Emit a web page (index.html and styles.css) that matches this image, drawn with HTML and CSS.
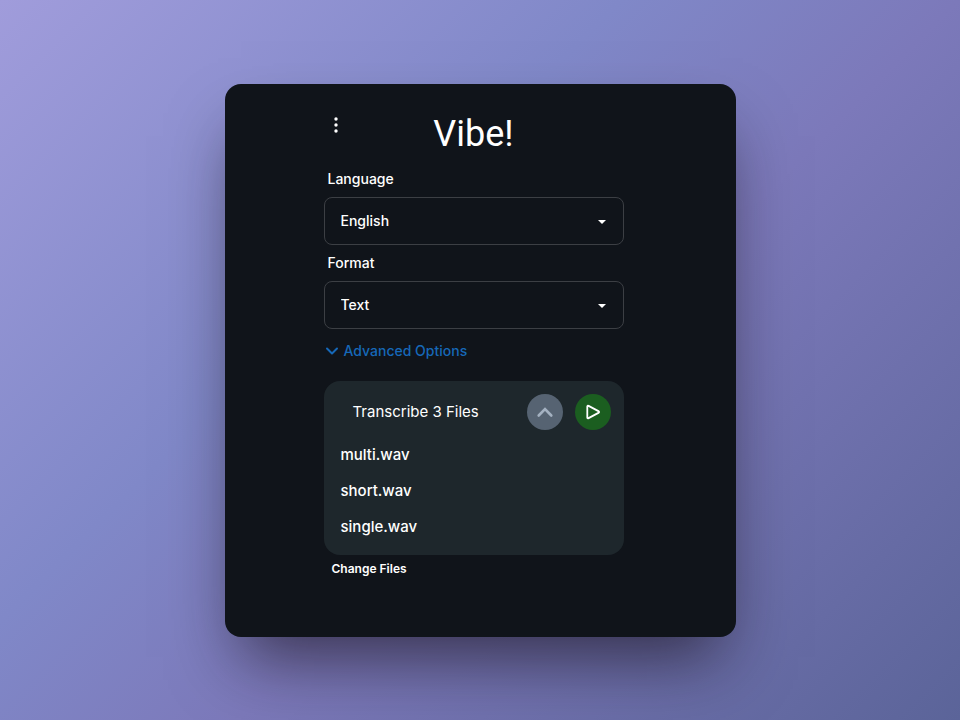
FILE: index.html
```html
<!DOCTYPE html>
<html lang="en">
<head>
    <meta charset="UTF-8">
    <meta name="viewport" content="width=device-width, initial-scale=1.0">
    <title>Vibe!</title>
    <link rel="stylesheet" href="styles.css">
</head>
<body>
    <main class="window">
        <div class="content">
            <header class="header">
                <button class="menu" type="button" aria-label="Menu">
                    <svg width="24" height="24" viewBox="0 0 24 24" fill="currentColor">
                        <circle cx="12" cy="6" r="1.7"/>
                        <circle cx="12" cy="12" r="1.7"/>
                        <circle cx="12" cy="18" r="1.7"/>
                    </svg>
                </button>
                <h1>Vibe!</h1>
            </header>
            <form class="options">
                <label for="language">Language</label>
                <select id="language">
                    <option>English</option>
                </select>
                <label for="format">Format</label>
                <select id="format">
                    <option>Text</option>
                </select>
                <button class="advanced" type="button">
                    <svg width="16" height="16" viewBox="0 0 16 16" fill="none" stroke="currentColor" stroke-width="2" stroke-linecap="round" stroke-linejoin="round">
                        <path d="M3 5.500l5 5 5-5"/>
                    </svg>
                    Advanced Options
                </button>
            </form>
            <section class="files">
                <div class="files-header">
                    <h2>Transcribe 3 Files</h2>
                    <button class="round" type="button" aria-label="Collapse">
                        <svg width="20" height="20" viewBox="0 0 20 20" fill="none" stroke="currentColor" stroke-width="2.600" stroke-linecap="round" stroke-linejoin="miter">
                            <path d="M3.700 13.500l6.300-6.300 6.300 6.300"/>
                        </svg>
                    </button>
                    <button class="round play" type="button" aria-label="Start">
                        <svg width="20" height="20" viewBox="0 0 20 20" fill="none" stroke="currentColor" stroke-width="1.800" stroke-linejoin="round">
                            <path d="M4.300 4.600Q4.300 3.200 5.600 3.900L15.400 9.100Q16.800 10 15.400 10.900L5.600 16.100Q4.300 16.800 4.300 15.400Z"/>
                        </svg>
                    </button>
                </div>
                <ul>
                    <li>multi.wav</li>
                    <li>short.wav</li>
                    <li>single.wav</li>
                </ul>
            </section>
            <button class="change" type="button">Change Files</button>
        </div>
    </main>
</body>
</html>
```

FILE: styles.css
```css
* {
    box-sizing: border-box;
}
body {
    margin: 0;
    min-height: 100vh;
    display: flex;
    align-items: center;
    justify-content: center;
    font-family: Inter, sans-serif;
    font-size: 14px;
    font-weight: 500;
    line-height: 20px;
    color: #fff;
    background: linear-gradient(135deg, #a09cdb 0%, #8088c8 37%, #7c79ba 57%, #5b6499 100%);
}
h1, h2, ul {
    margin: 0;
    padding: 0;
}
button {
    padding: 0;
    border: none;
    background: none;
    color: inherit;
    font: inherit;
    cursor: pointer;
}
svg {
    display: block;
}
.window {
    width: 511px;
    max-width: 100%;
    padding: 29px 112px 58px 99px;
    background-color: #10141a;
    border-radius: 16px;
    box-shadow: 0 36px 64px -16px rgba(20, 12, 22, 0.65);
}
.content {
    display: flex;
    flex-direction: column;
}
.header {
    display: grid;
    grid-template-columns: 24px 1fr 24px;
    align-items: start;
}
.header h1 {
    font-family: Roboto, sans-serif;
    font-size: 36px;
    font-weight: 400;
    line-height: 42px;
    text-align: center;
}
.options {
    display: flex;
    flex-direction: column;
}
.options label {
    padding: 10px 4px 11px;
    line-height: 15px;
}
.options label:first-child {
    padding-top: 16px;
}
select {
    appearance: none;
    width: 100%;
    height: 48px;
    padding: 0 16px;
    border: 1px solid #3c3f44;
    border-radius: 8px;
    color: inherit;
    font: inherit;
    background: url("data:image/svg+xml,%3Csvg xmlns='http://www.w3.org/2000/svg' width='8' height='4'%3E%3Cpath d='M0 0h8L4 4z' fill='white'/%3E%3C/svg%3E") no-repeat right 17px top 22px;
}
.advanced {
    display: flex;
    align-items: center;
    align-self: flex-start;
    gap: 4px;
    margin-top: 12px;
    color: #1668b8;
}
.files {
    margin-top: 20px;
    padding: 13px 13px 10px;
    background-color: #1e272c;
    border-radius: 16px;
}
.files-header {
    display: flex;
    align-items: center;
    gap: 12px;
}
.files-header h2 {
    flex: 1;
    padding-left: 16px;
    font-size: 15px;
    font-weight: 400;
}
.round {
    display: flex;
    align-items: center;
    justify-content: center;
    width: 36px;
    height: 36px;
    border-radius: 50%;
    background-color: #566372;
    color: #a4b1c1;
}
.play {
    background-color: #1b5e20;
    color: #fff;
}
.files ul {
    padding: 7px 4px 0;
    list-style: none;
    font-size: 15px;
    line-height: 36px;
}
.change {
    align-self: flex-start;
    margin-top: 4px;
    padding: 0 8px;
    font-size: 12px;
    font-weight: 600;
}
```
